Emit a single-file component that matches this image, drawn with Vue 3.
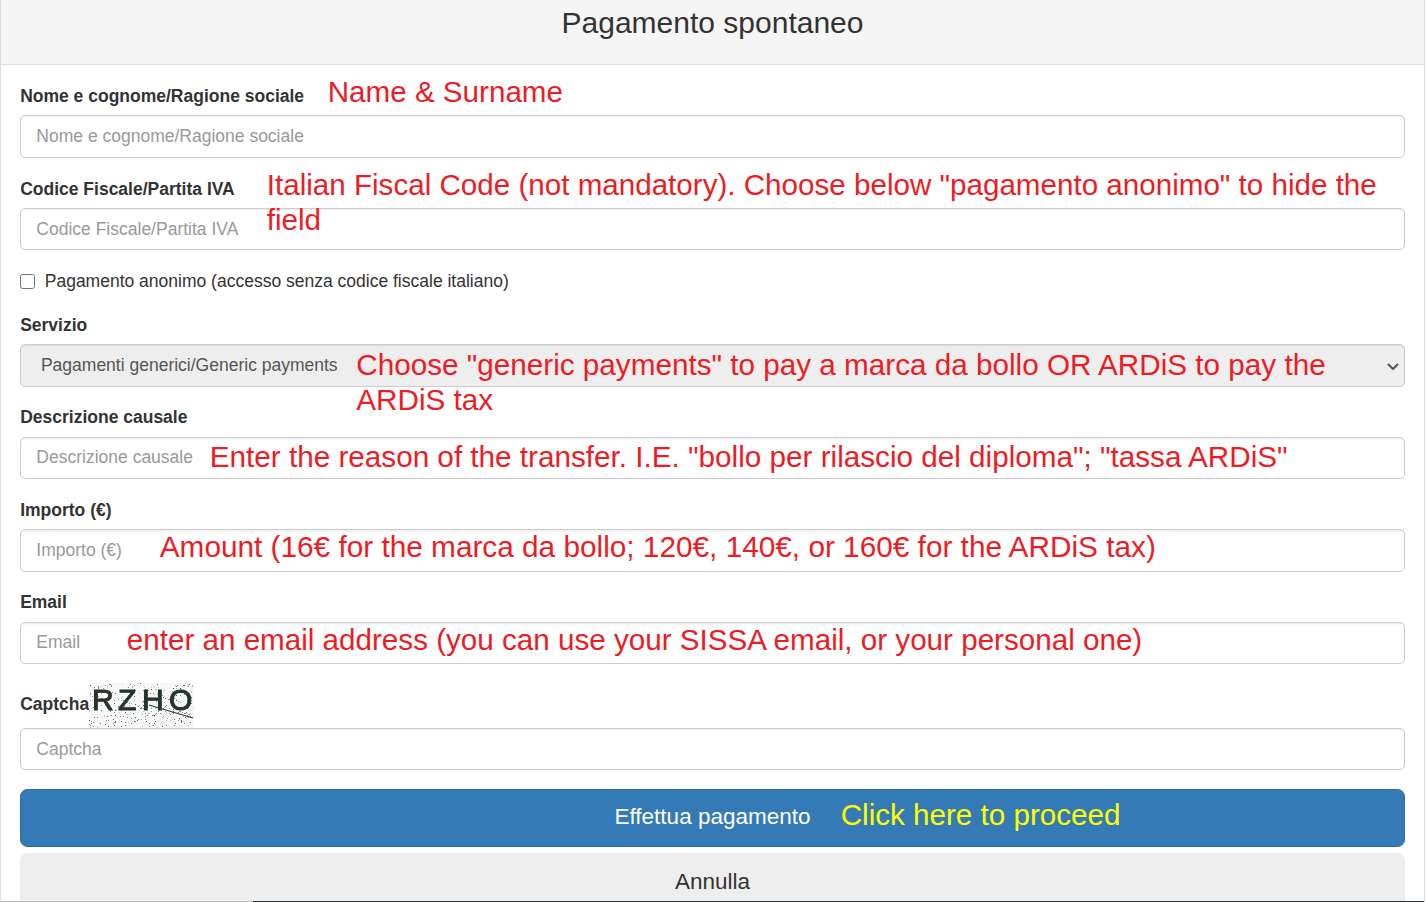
<script setup>
const specks = []
let seed = 7
const rnd = () => {
  seed = (seed * 16807) % 2147483647
  return seed / 2147483647
}
for (let i = 0; i < 330; i++) {
  specks.push({
    x: Math.round(rnd() * 104),
    y: Math.round(rnd() * 44),
    o: (0.2 + rnd() * 0.6).toFixed(2)
  })
}
</script>

<template>
  <div class="panel">
    <header class="heading">
      <h3 class="title">Pagamento spontaneo</h3>
    </header>

    <form class="body" @submit.prevent>
      <div class="group">
        <label class="label">Nome e cognome/Ragione sociale</label>
        <input class="control" type="text" placeholder="Nome e cognome/Ragione sociale" />
        <span class="note note-name">Name &amp; Surname</span>
      </div>

      <div class="group">
        <label class="label label-low">Codice Fiscale/Partita IVA</label>
        <input class="control control-low" type="text" placeholder="Codice Fiscale/Partita IVA" />
        <span class="note note-fiscal">Italian Fiscal Code (not mandatory). Choose below "pagamento anonimo" to hide the<br />field</span>
      </div>

      <div class="group check">
        <input class="box" type="checkbox" />
        <span>Pagamento anonimo (accesso senza codice fiscale italiano)</span>
      </div>

      <div class="group">
        <label class="label">Servizio</label>
        <select class="control select">
          <option>Pagamenti generici/Generic payments</option>
        </select>
        <svg class="chevron" width="12" height="7" viewBox="0 0 12 7" aria-hidden="true">
          <path d="M1 1 L6 6 L11 1" fill="none" stroke="#555" stroke-width="2" />
        </svg>
        <span class="note note-service">Choose "generic payments" to pay a marca da bollo OR ARDiS to pay the<br />ARDiS tax</span>
      </div>

      <div class="group">
        <label class="label">Descrizione causale</label>
        <input class="control" type="text" placeholder="Descrizione causale" />
        <span class="note note-reason">Enter the reason of the transfer. I.E. "bollo per rilascio del diploma"; "tassa ARDiS"</span>
      </div>

      <div class="group">
        <label class="label">Importo (€)</label>
        <input class="control" type="text" placeholder="Importo (€)" />
        <span class="note note-amount">Amount (16€ for the marca da bollo; 120€, 140€, or 160€ for the ARDiS tax)</span>
      </div>

      <div class="group">
        <label class="label">Email</label>
        <input class="control" type="text" placeholder="Email" />
        <span class="note note-email">enter an email address (you can use your SISSA email, or your personal one)</span>
      </div>

      <div class="group">
        <div class="captcha-row">
          <label class="label captcha-label">Captcha</label>
          <svg class="captcha" width="105" height="45" viewBox="0 0 105 45" role="img" aria-label="Captcha">
            <rect width="105" height="45" fill="#f6f7f6" />
            <rect
              v-for="(s, i) in specks"
              :key="i"
              :x="s.x"
              :y="s.y"
              width="1"
              height="1"
              fill="#2c3a30"
              :opacity="s.o"
            />
            <text class="captcha-text" x="3 29 53 80" y="27">RZHO</text>
            <path class="captcha-line" d="M60 22 L104 35" />
          </svg>
        </div>
        <input class="control control-low" type="text" placeholder="Captcha" />
      </div>

      <button class="btn primary" type="button">
        Effettua pagamento
        <span class="note note-click">Click here to proceed</span>
      </button>
      <button class="btn neutral" type="button">Annulla</button>
    </form>
    <div class="bottom-edge"></div>
  </div>
</template>

<style>
html,
body {
  height: 100%;
  overflow: hidden;
  background: #fff;
}
</style>

<style scoped>
.panel {
  position: relative;
  box-sizing: border-box;
  width: 1425px;
  height: 902px;
  overflow: hidden;
  border: solid #ddd;
  border-width: 0 1.25px;
  font-family: "Liberation Sans", Arial, sans-serif;
  font-size: 17.5px;
  line-height: 25px;
  color: #333;
}

.heading {
  box-sizing: border-box;
  height: 65px;
  background: #f5f5f5;
  border-bottom: 1.25px solid #ddd;
}

.title {
  margin: 0;
  padding-top: 6px;
  font-size: 30px;
  font-weight: 400;
  line-height: 33px;
  text-align: center;
}

.body {
  padding: 18.99px 18.75px 18.75px;
}

.group {
  position: relative;
  margin-bottom: 18.75px;
}

.label {
  display: block;
  margin-bottom: 6.25px;
  padding-left: 0.4px;
  font-weight: 700;
}

.label-low {
  margin-bottom: 5.25px;
  padding-top: 1px;
}

.control {
  display: block;
  box-sizing: border-box;
  width: 100%;
  height: 42.5px;
  padding: 7.5px 15.6px;
  font: inherit;
  color: #555;
  background: #fff;
  border: 1.25px solid #ccc;
  border-radius: 5px;
  box-shadow: inset 0 1.25px 1.25px rgba(0, 0, 0, 0.075);
}

.control-low {
  padding-top: 9.5px;
  padding-bottom: 7.5px;
}

.control::placeholder {
  color: #999;
  opacity: 1;
}

.select {
  padding-left: 20.2px;
  background-color: #eee;
  appearance: none;
}

.chevron {
  position: absolute;
  right: 6px;
  top: 50px;
  pointer-events: none;
}

.check {
  display: flex;
  align-items: center;
  gap: 10px;
  height: 25.1px;
}

.box {
  width: 15px;
  height: 15px;
  margin: 0;
}

.captcha-row {
  display: flex;
  align-items: flex-end;
  height: 44.8px;
}

.captcha-label {
  margin-bottom: 11px;
}

.captcha {
  display: block;
  flex: none;
}

.captcha-text {
  font-family: "Liberation Sans", sans-serif;
  font-size: 30px;
  font-weight: 400;
  fill: #24352b;
  stroke: #24352b;
  stroke-width: 1px;
  filter: blur(0.7px);
}

.captcha-line {
  fill: none;
  stroke: #2f4035;
  stroke-width: 1.3;
  filter: blur(0.4px);
}

.btn {
  position: relative;
  display: block;
  box-sizing: border-box;
  width: 100%;
  height: 57.9px;
  padding: 12.5px 20px;
  font-family: inherit;
  font-size: 22.5px;
  line-height: 30px;
  border: 1.25px solid transparent;
  border-radius: 7.5px;
  text-align: center;
}

.primary {
  padding-bottom: 14px;
  color: #fff;
  background: #337ab7;
  border-color: #2e6da4;
}

.neutral {
  margin-top: 5.85px;
  padding-top: 13.5px;
  color: #333;
  background: #eee;
  border-color: #eee;
}

.note {
  position: absolute;
  font-size: 29.6px;
  line-height: 35px;
  color: #ed1c24;
  white-space: nowrap;
}

.note-name {
  left: 308px;
  top: -10px;
}

.note-fiscal {
  left: 247px;
  top: -9px;
}

.note-service {
  left: 336.5px;
  top: 34px;
  font-size: 29.68px;
}

.note-reason {
  left: 190px;
  top: 34px;
  font-size: 29.68px;
}

.note-amount {
  left: 140px;
  top: 31px;
  font-size: 29.78px;
}

.note-email {
  left: 107px;
  top: 32px;
  font-size: 29.62px;
}

.note-click {
  left: 820px;
  top: 7px;
  color: #ffff00;
}

.bottom-edge {
  position: absolute;
  left: 0;
  right: 0;
  bottom: 0;
  height: 1px;
  background: linear-gradient(to right, #bbb 0, #bbb 252px, #2b3138 252px, #2b3138 100%);
}
</style>
